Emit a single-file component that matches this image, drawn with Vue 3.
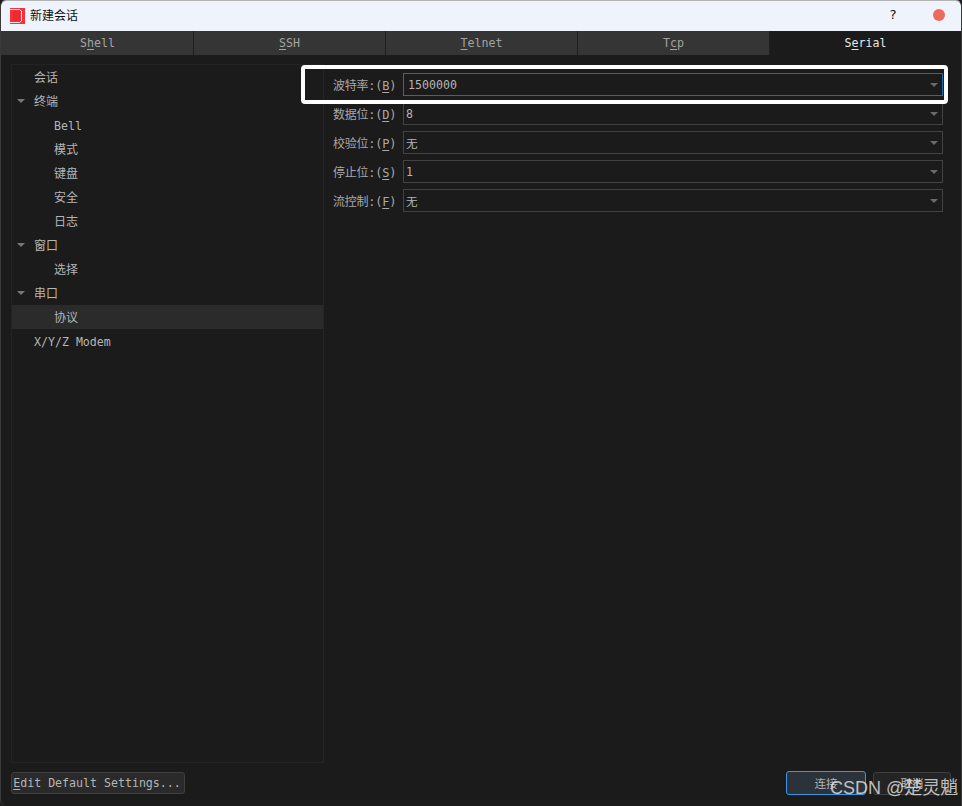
<script setup>
const tabs = [
  { pre: 'S', key: 'h', post: 'ell' },
  { pre: '', key: 'S', post: 'SH' },
  { pre: '', key: 'T', post: 'elnet' },
  { pre: 'T', key: 'c', post: 'p' },
  { pre: 'S', key: 'e', post: 'rial', active: true },
]
const tree = [
  { text: '会话', level: 1, cjk: true },
  { text: '终端', level: 1, arrow: true, cjk: true },
  { text: 'Bell', level: 2 },
  { text: '模式', level: 2, cjk: true },
  { text: '键盘', level: 2, cjk: true },
  { text: '安全', level: 2, cjk: true },
  { text: '日志', level: 2, cjk: true },
  { text: '窗口', level: 1, arrow: true, cjk: true },
  { text: '选择', level: 2, cjk: true },
  { text: '串口', level: 1, arrow: true, cjk: true },
  { text: '协议', level: 2, selected: true, cjk: true },
  { text: 'X/Y/Z Modem', level: 1 },
]
const fields = [
  { label: '波特率', key: 'B', value: '1500000', focus: true },
  { label: '数据位', key: 'D', value: '8' },
  { label: '校验位', key: 'P', value: '无' },
  { label: '停止位', key: 'S', value: '1' },
  { label: '流控制', key: 'F', value: '无' },
]
</script>

<template>
  <div class="window">
    <header class="titlebar">
      <svg class="logo" width="15" height="16" viewBox="0 0 15 16">
        <rect x="0" y="0" width="15" height="16" fill="#f4333c" />
        <path d="M0 1.500H9.500L11.500 3V13L9.500 14.500H0" fill="none" stroke="#ffffff" stroke-width="1" opacity="0.85" />
        <rect x="3" y="3" width="7" height="10" fill="#ee2a30" />
      </svg>
      <span class="title">新建会话</span>
      <span class="spacer"></span>
      <span class="help">?</span>
      <span class="close"></span>
    </header>

    <nav class="tabs">
      <div v-for="t in tabs" :key="t.post" class="tab" :class="{ active: t.active }">
        {{ t.pre }}<u>{{ t.key }}</u>{{ t.post }}
      </div>
    </nav>

    <main class="body">
      <aside class="tree">
        <div
          v-for="item in tree"
          :key="item.text"
          class="row"
          :class="['level' + item.level, { selected: item.selected, cjk: item.cjk }]"
        >
          <span v-if="item.arrow" class="tree-arrow"></span>
          <span>{{ item.text }}</span>
        </div>
      </aside>

      <section class="form">
        <div v-for="f in fields" :key="f.key" class="field">
          <label class="label">{{ f.label }}:(<u>{{ f.key }}</u>)</label>
          <div class="combo" :class="{ focus: f.focus }">
            <span>{{ f.value }}</span>
            <span class="combo-arrow"></span>
          </div>
        </div>
      </section>
    </main>

    <footer class="footer">
      <button class="btn edit"><u>E</u>dit Default Settings...</button>
      <span class="spacer"></span>
      <button class="btn primary">连接</button>
      <button class="btn cancel">取消</button>
    </footer>

    <div class="highlight"></div>
    <div class="watermark">CSDN @楚灵魈</div>
  </div>
</template>

<style>
html, body { margin: 0; background: #1b1b1b; }
</style>

<style scoped>
.window {
  position: relative;
  width: 962px;
  height: 806px;
  box-sizing: border-box;
  overflow: hidden;
  display: flex;
  flex-direction: column;
  background: #1b1b1b;
  color: #b5b5b5;
  font-family: "DejaVu Sans Mono", "Noto Sans CJK SC", monospace;
  font-size: 11.6px;
  border-top: 1px solid #b4b4b4;
  border-left: 1px solid #3a3a3a;
  border-right: 1px solid #3a3a3a;
  border-radius: 6px 6px 0 6px;
}
.titlebar {
  height: 30px;
  flex: none;
  display: flex;
  align-items: center;
  background: #eff3fb;
  color: #111;
  padding-left: 9px;
  padding-bottom: 3px;
  box-sizing: border-box;
  font-family: "Noto Sans CJK SC", sans-serif;
  font-size: 12px;
}
.logo { margin-right: 5px; margin-top: 2px; }
.spacer { flex: 1; }
.help {
  width: 14px;
  margin-right: 33px;
  font-family: "DejaVu Sans Mono", monospace;
  font-size: 13px;
  text-align: center;
}
.close {
  width: 12px;
  height: 12px;
  margin-right: 16px;
  border-radius: 50%;
  background: #ee6a5f;
}
.tabs {
  height: 24px;
  flex: none;
  display: flex;
  background: #353535;
  padding-left: 1px;
}
.tab {
  flex: 1;
  display: flex;
  align-items: center;
  justify-content: center;
  white-space: pre;
  color: #a3a3a3;
  border-right: 1px solid #1f1f1f;
}
.tab.active {
  background: #1b1b1b;
  color: #e6e6e6;
  border-right: none;
}
.body {
  flex: 1;
  min-height: 0;
  display: flex;
  padding: 9px 18px 0 10px;
}
.tree {
  width: 313px;
  height: 699px;
  flex: none;
  box-sizing: border-box;
  border: 1px solid #232323;
  border-right-color: #262626;
}
.row {
  position: relative;
  height: 24px;
  box-sizing: border-box;
  display: flex;
  align-items: center;
  padding-top: 1px;
  white-space: pre;
  color: #b5b5b5;
}
.row.cjk { font-size: 12px; padding-top: 0; padding-bottom: 2px; }
.level1 { padding-left: 22px; }
.level2 { padding-left: 42px; }
.row.selected { background: #2b2b2b; }
.tree-arrow {
  position: absolute;
  left: 5px;
  top: 10px;
  border-left: 4px solid transparent;
  border-right: 4px solid transparent;
  border-top: 4px solid #787878;
}
.form {
  flex: 1;
  padding: 9px 0 0 9px;
  display: flex;
  flex-direction: column;
  gap: 6px;
}
.field {
  height: 23px;
  display: flex;
  align-items: center;
}
.label {
  width: 70px;
  flex: none;
  color: #a8a8a8;
  white-space: nowrap;
  font-size: 12px;
  letter-spacing: -0.25px;
}
.combo {
  flex: 1;
  height: 23px;
  box-sizing: border-box;
  display: flex;
  align-items: center;
  justify-content: space-between;
  padding: 0 4px 0 2px;
  border: 1px solid #434343;
  color: #b5b5b5;
}
.combo.focus { border-color: #1a6fb0; padding-left: 4px; padding-top: 1px; }
.combo-arrow {
  border-left: 4px solid transparent;
  border-right: 4px solid transparent;
  border-top: 4px solid #6a6a6a;
}
.footer {
  height: 43px;
  flex: none;
  display: flex;
  align-items: center;
  padding: 0 10px 3px;
  box-sizing: border-box;
}
.btn {
  font: inherit;
  color: #b5b5b5;
  border-radius: 3px;
  padding: 0;
}
.edit {
  width: 174px;
  height: 22px;
  padding-right: 2px;
  background: #2a2a2a;
  border: 1px solid #3f3f3f;
}
.primary {
  width: 80px;
  height: 24px;
  margin-right: 7px;
  background: #2b323a;
  border: 1px solid #3a97df;
}
.cancel {
  width: 78px;
  height: 23px;
  background: #242424;
  border: 1px solid #3f3f3f;
}
.highlight {
  position: absolute;
  left: 300px;
  top: 64px;
  width: 647px;
  height: 39px;
  box-sizing: border-box;
  border: 4px solid #fff;
  border-radius: 4px;
}
.watermark {
  position: absolute;
  left: 829px;
  top: 772px;
  font-family: "Liberation Sans", "Noto Sans CJK SC", sans-serif;
  font-size: 18px;
  white-space: nowrap;
  color: rgba(235, 235, 235, 0.78);
}
u { text-underline-offset: 2px; }
</style>
